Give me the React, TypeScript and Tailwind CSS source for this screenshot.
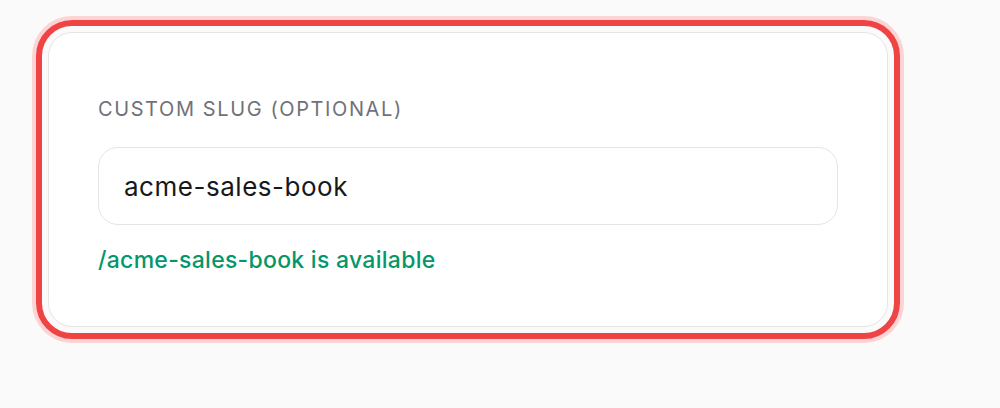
export default function App() {
  return (
    <div className="min-h-[408px] w-full bg-[#fafafa] pl-[36px] pt-[20px] font-['Inter',sans-serif]">
      <div className="w-fit rounded-[36px] border-[6px] border-[#ef4444] p-[6px] shadow-[0_0_0_4px_#fdd3d3]">
        <div className="w-[840px] rounded-[24px] border border-[#e5e5e5] bg-white px-[49px] pt-[64px] pb-[51px]">
          <label className="block text-[20px] leading-[24px] tracking-[0.08em] text-[#71717a]">
            CUSTOM SLUG (OPTIONAL)
          </label>
          <div className="mt-[26px] flex h-[78px] items-center rounded-[20px] border border-[#e5e5e5] bg-white px-[25px]">
            <span className="text-[26px] tracking-[0.02em] text-[#18181b]">acme-sales-book</span>
          </div>
          <p className="mt-[20px] text-[23px] font-medium leading-[30px] tracking-[0.012em] text-[#059669]">
            /acme-sales-book is available
          </p>
        </div>
      </div>
    </div>
  );
}
